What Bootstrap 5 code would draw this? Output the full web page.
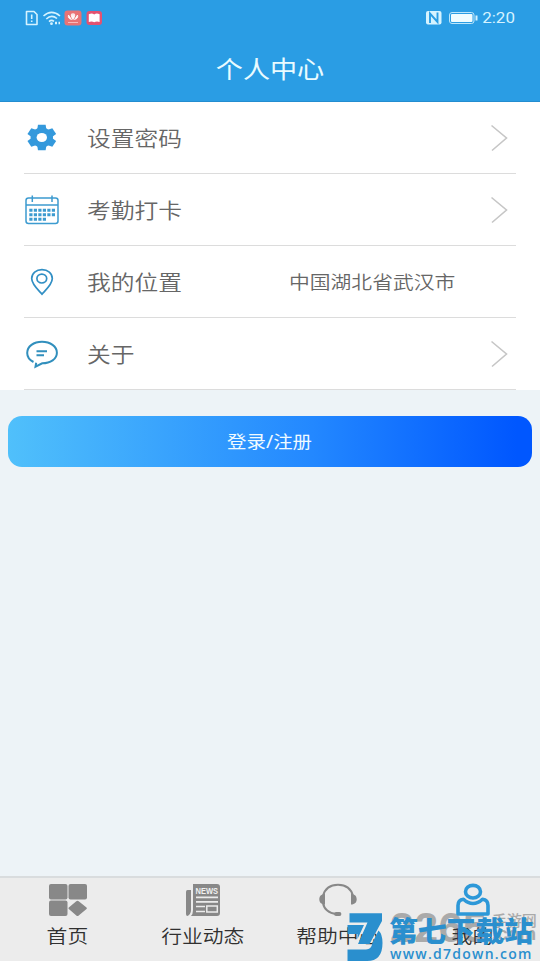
<!DOCTYPE html>
<html lang="zh-CN">
<head>
<meta charset="utf-8">
<meta name="viewport" content="width=device-width, initial-scale=1">
<title>个人中心</title>
<link href="https://cdn.jsdelivr.net/npm/bootstrap@5.3.0/dist/css/bootstrap.min.css" rel="stylesheet">
<style>
body{font-family:"Noto Sans","Noto Sans CJK SC",sans-serif;background:#edf3f7;height:961px;overflow:hidden;font-weight:350}
svg{display:block;flex:none}
.wide{display:inline-block;transform:scaleX(1.13);white-space:nowrap;line-height:1}
.topbar{background:#2a9de4;height:102px;border-bottom:1px solid #238dd0;color:#e9fbff}
.status{height:35px;padding:0 25px 0 24px}
.clock{font:400 15px/1 Roboto,sans-serif;color:#d5f3ff;transform-origin:right;padding-top:2px}
.heading{height:66px;font-size:24px;font-weight:400;padding-top:2px}
.menu{height:288px;padding:0 24px}
.menu-row{height:72px;border-bottom:1px solid #dcdcdc;color:#666}
.menu-icon{width:36px;margin-right:27px}
.menu-row .wide{font-size:21px;transform-origin:left;padding-top:2px}
.menu-row .place{font-size:18.4px;margin-right:80px}
.login{height:51px;margin:26px 8px 0 8px;border-radius:14px;background:linear-gradient(90deg,#50c0fb,#2388ff 58%,#0057ff 97%);color:#effaff;font-size:17.2px;border:0;font-weight:400}
.login .wide{padding-top:2px}
.tabs{height:85px;background:#ececec;border-top:2px solid #d9dcde;color:#303030;z-index:0}
.tab{padding-top:5px;gap:10px;z-index:1}
.tab .wide{font-size:18.4px}
.stamp{left:390px;top:28px;color:#aaa;z-index:0;line-height:1;white-space:nowrap}
.stamp-num{font:700 43px/1 "Liberation Sans",sans-serif;letter-spacing:.3px}
.stamp-side{width:47px;font-size:15px;font-weight:500;line-height:16px;margin-left:5px;padding-top:6px}
.stamp-com{font:700 19px/12px "Liberation Sans",sans-serif}
.brand{left:347px;top:913px;z-index:5;color:#2a8fce}
.brand-text{margin-left:6px;padding-top:3px}
.brand-name{font-size:28.8px;line-height:30px;font-weight:900;white-space:nowrap}
.brand-url{font:600 14px/14px "Open Sans",sans-serif;letter-spacing:1.25px;white-space:nowrap;margin:1px 0 0 1px}
</style>
</head>
<body class="d-flex flex-column position-relative">
<header class="topbar">
  <div class="status d-flex align-items-center justify-content-between">
    <svg width="80" height="18" viewBox="0 0 80 18" fill="none">
      <path d="M2.500 2.500H10L13 5.500V15.500H2.500Z" stroke="#d5f3ff" stroke-width="1.600" stroke-linejoin="round"/>
      <path d="M7.700 5.500V10M7.700 11.500V13" stroke="#d5f3ff" stroke-width="1.600"/>
      <path d="M19.500 7Q27.500 -.1 36 7M22.300 10Q27.500 5 33 9.500M25 12.600Q27.500 10.400 30 12.400" stroke="#d5f3ff" stroke-width="1.600"/>
      <circle cx="27.500" cy="14.700" r="1.400" fill="#d5f3ff"/><path d="M31 14H33M34.500 14H36" stroke="#d5f3ff" stroke-width="2.500"/>
      <rect x="40.500" y="1.500" width="17" height="15" rx="3" fill="#e87375"/>
      <path d="M49 10.500Q46 6 48.200 4.500L49 9L49.800 4.500Q52 6 49 10.500ZM47.500 10.500Q43.500 9.500 44.500 6ZM50.500 10.500Q54.500 9.500 53.500 6Z" fill="#fff" stroke="#fff" stroke-width=".8"/><path d="M44 13.500H54" stroke="#f8babb"/>
      <rect x="62.500" y="2" width="15.500" height="14" rx="3" fill="#e25271"/>
      <path d="M64.800 5.200Q68 3.900 70.200 5.400Q72.500 3.900 75.600 5.200V13Q72.500 12 70.200 13.300Q68 12 64.800 13Z" fill="#fff"/>
    </svg>
    <div class="d-flex align-items-center">
      <svg width="57" height="16" viewBox="0 0 57 16" fill="none">
        <rect x="1" y="1" width="15.500" height="13.500" rx="2" fill="#d5f3ff"/><path d="M5 13V3.500L12.500 12V2.500" stroke="#2a9de4" stroke-width="1.900"/>
        <rect x="24.500" y="2.500" width="24.500" height="11" rx="2.500" stroke="#bce6fb"/><rect x="26" y="4" width="21.500" height="8" rx="1" fill="#effcff"/><path d="M51.500 5.500V10.500" stroke="#d5f3ff" stroke-width="2"/>
      </svg>
      <span class="wide clock ms-1">2:20</span>
    </div>
  </div>
  <h1 class="heading d-flex align-items-center justify-content-center m-0"><span class="wide">个人中心</span></h1>
</header>

<main class="flex-grow-1">
  <div class="menu bg-white">
    <div class="menu-row d-flex align-items-center">
      <div class="menu-icon"><svg width="36" height="36" viewBox="0 0 36 36">
        <g fill="#3499dc" transform="translate(17.800 17.500) scale(1.130 1)"><path id="tooth" d="M-3.400 -12.700H3.400L4.200 -7H-4.200Z"/><use href="#tooth" transform="rotate(60)"/><use href="#tooth" transform="rotate(120)"/><use href="#tooth" transform="rotate(180)"/><use href="#tooth" transform="rotate(240)"/><use href="#tooth" transform="rotate(300)"/><circle r="9.900"/></g><ellipse cx="17.800" cy="17.500" rx="5.200" ry="4.600" fill="#fff"/></svg></div>
      <span class="wide">设置密码</span>
      <svg class="ms-auto me-2" width="17" height="28" viewBox="0 0 17 28" fill="none"><path d="M.5 1.500L15.500 14L1 26.500" stroke="#c6c6c6" stroke-width="1.600"/></svg>
    </div>
    <div class="menu-row d-flex align-items-center">
      <div class="menu-icon"><svg width="36" height="36" viewBox="0 0 36 36" fill="none" stroke="#3c9bd0" stroke-width="1.500">
        <rect x="2" y="6" width="32" height="25.500" rx="2.500"/><path d="M2 13H34M8.300 3.500V10M28 3.500V10"/><path d="M5.300 18.300H31.500M5.300 22.800H31.500M5.300 27.300H22.500" stroke-width="3" stroke-dasharray="3.200 1.300"/></svg></div>
      <span class="wide">考勤打卡</span>
      <svg class="ms-auto me-2" width="17" height="28" viewBox="0 0 17 28" fill="none"><path d="M.5 1.500L15.500 14L1 26.500" stroke="#c6c6c6" stroke-width="1.600"/></svg>
    </div>
    <div class="menu-row d-flex align-items-center">
      <div class="menu-icon"><svg width="36" height="36" viewBox="0 0 36 36" fill="none" stroke="#318fc4" stroke-width="1.700">
        <path d="M18 30.200C14 25.800 7.700 20.400 7.700 14.600C7.700 9.200 12.200 5.700 18 5.700S28.300 9.200 28.300 14.600C28.300 20.400 22 25.800 18 30.200Z"/><ellipse cx="17.800" cy="14.600" rx="4.900" ry="4.400"/></svg></div>
      <span class="wide">我的位置</span>
      <span class="wide place ms-auto">中国湖北省武汉市</span>
    </div>
    <div class="menu-row d-flex align-items-center">
      <div class="menu-icon"><svg width="36" height="36" viewBox="0 0 36 36" fill="none" stroke="#318fbd" stroke-width="2">
        <path d="M9.500 26C5.500 24 3.200 20.500 3.200 17C3.200 10.400 9.700 5.800 18 5.800S32.900 10.400 32.900 16.700S26.500 27.300 18.200 27.300L11.500 30.600L12.200 26.800"/><path d="M12.500 15.200H23M12.500 19.200H20"/></svg></div>
      <span class="wide">关于</span>
      <svg class="ms-auto me-2" width="17" height="28" viewBox="0 0 17 28" fill="none"><path d="M.5 1.500L15.500 14L1 26.500" stroke="#c6c6c6" stroke-width="1.600"/></svg>
    </div>
  </div>
  <div class="d-grid"><button class="btn login p-0" type="button"><span class="wide">登录/注册</span></button></div>
</main>

<nav class="tabs position-relative d-flex">
  <div class="stamp position-absolute d-flex"><span class="stamp-num">2265</span><div class="stamp-side"><div>手游网</div><div class="stamp-com">.com</div></div></div>
  <div class="tab col-3 d-flex flex-column align-items-center">
    <svg width="40" height="34" viewBox="0 0 40 34" fill="#888"><rect x="1" y="1" width="18.500" height="15.500" rx="2"/><rect x="20.500" y="1" width="18.500" height="15.500" rx="2"/><rect x="1" y="17.500" width="18.500" height="15.500" rx="2"/><path d="M28.300 18.300Q29.500 17.300 30.700 18.300L38.500 24.500Q39.400 25.300 38.500 26.100L30.700 32.400Q29.500 33.400 28.300 32.400L20.800 26.100Q20 25.300 20.800 24.500Z"/></svg>
    <span class="wide">首页</span>
  </div>
  <div class="tab col-3 d-flex flex-column align-items-center">
    <svg width="40" height="34" viewBox="0 0 40 34"><path d="M10 1H34Q37 1 37 4V30Q37 33 34 33H8Q10 31 10 27ZM4.500 7H8V27Q8 31 4.500 33Q3 33 3 31V9Q3 7 4.500 7Z" fill="#888"/><text x="12.500" y="11" font-family="Liberation Sans" font-weight="700" font-size="9.500" textLength="22.500" lengthAdjust="spacingAndGlyphs" fill="#f0f0f0">NEWS</text><path d="M13 14.300H35M13 18.800H35M13 23.500H22M13 28.500H22" stroke="#ececec" stroke-width="1.700"/><path d="M23.800 23H34.300V29H23.800Z" fill="none" stroke="#ececec" stroke-width="1.500"/></svg>
    <span class="wide">行业动态</span>
  </div>
  <div class="tab col-3 d-flex flex-column align-items-center">
    <svg width="40" height="34" viewBox="0 0 40 34" fill="none" stroke="#888"><path d="M5 13C7 5 12.500 1.700 20 1.700S33 5 35 13M5 20C6 26 11 30.500 18 31" stroke-width="2"/><path d="M7 11V21.500C3 21.500 1.300 19 1.300 16.200S3 11 7 11ZM33 11V21.500C37 21.500 38.700 19 38.700 16.200S37 11 33 11Z" fill="#888" stroke="none"/><path d="M18 31H21.500" stroke-width="3.800" stroke-linecap="round"/></svg>
    <span class="wide">帮助中心</span>
  </div>
  <div class="tab col-3 d-flex flex-column align-items-center">
    <svg width="40" height="34" viewBox="0 0 40 34" fill="none" stroke="#2d98d8" stroke-width="3.600"><ellipse cx="20" cy="8.700" rx="7.500" ry="6.300"/><path d="M10.500 16.300Q5 17 5 22.500V31H35V22.500Q35 17 29.500 16.300Q25 20.500 20 20.500T10.500 16.300Z" stroke-linejoin="round"/></svg>
    <span class="wide">我的</span>
  </div>
</nav>

<div class="brand position-absolute d-flex">
  <svg width="36" height="48" viewBox="0 0 36 48" fill="#2a8fce"><path d="M2.500 .3H35V8L22.500 31H11L20.500 9.500H2.500Z"/><path d="M.5 12H17L10.500 26V21H.5ZM31.500 17.500Q35.500 21 35.500 30Q35.500 48 20 48H.5V36.500H19Q24.500 36.500 25.500 29.500Z"/></svg>
  <div class="brand-text"><div class="brand-name">第七下载站</div><div class="brand-url">www.d7down.com</div></div>
</div>
<script src="https://cdn.jsdelivr.net/npm/bootstrap@5.3.0/dist/js/bootstrap.bundle.min.js"></script>
</body>
</html>
